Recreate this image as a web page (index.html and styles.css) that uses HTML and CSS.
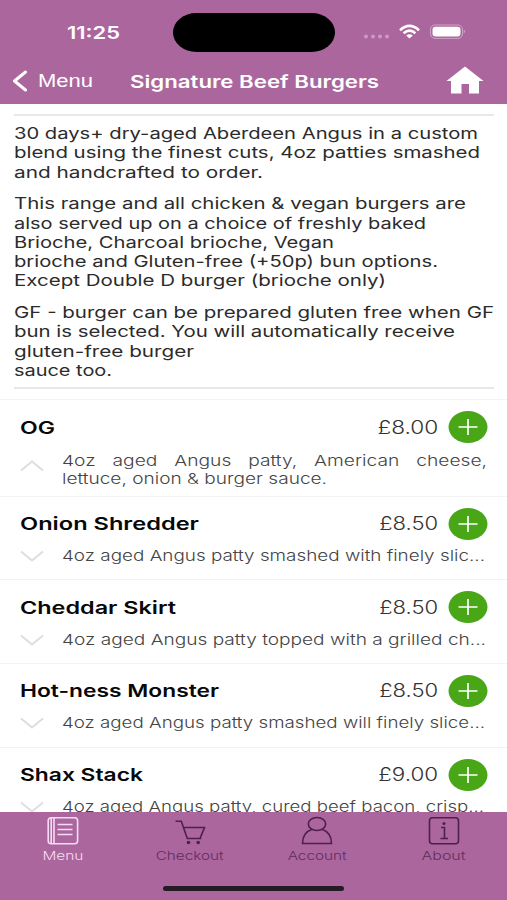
FILE: index.html
```
<!DOCTYPE html>
<html lang="en">
<head>
    <meta charset="UTF-8">
    <title>Signature Beef Burgers</title>
    <link rel="stylesheet" href="styles.css">
</head>
<body>
<div class="app">
    <header class="header">
        <div class="status">
            <span class="time"><span class="fit" data-w="53">11:25</span></span>
            <span class="island"></span>
            <svg class="status-icons" width="104" height="20" viewBox="0 0 104 20">
                <g fill="#fff" opacity=".35">
                    <circle cx="5" cy="14.5" r="2"/><circle cx="12" cy="14.5" r="2"/><circle cx="19" cy="14.5" r="2"/><circle cx="26" cy="14.5" r="2"/>
                </g>
                <g fill="none" stroke="#fff" stroke-width="2.6">
                    <path d="M39 8.2Q48.5-.3 58 8.2"/>
                    <path d="M42.6 11.3Q48.5 6 54.4 11.3"/>
                </g>
                <path d="M45.2 13.4Q48.5 11 51.8 13.4L48.5 16.4Z" fill="#fff"/>
                <rect x="69.5" y="3" width="32" height="13.4" rx="4.5" fill="none" stroke="#fff" opacity=".4"/>
                <rect x="71.5" y="4.8" width="28" height="9.8" rx="3" fill="#fff"/>
                <path d="M102.8 7.6q2 2 0 4z" fill="#fff" opacity=".5"/>
            </svg>
        </div>
        <div class="navbar">
            <svg class="back" width="16" height="22" viewBox="0 0 16 22"><path d="M13.5 2 2.5 11l11 9" fill="none" stroke="#fff" stroke-width="3" stroke-linecap="round" stroke-linejoin="round"/></svg>
            <span class="back-text"><span class="fit" data-w="55">Menu</span></span>
            <h1><span class="fit" data-w="249">Signature Beef Burgers</span></h1>
            <svg class="home" width="38" height="28" viewBox="0 0 38 28"><path d="M19 .5 37.5 15H33v12.5H23V18h-7.500v9.500H5V15H.5Z" fill="#fff"/></svg>
        </div>
    </header>

    <main class="content">
        <section class="intro">
            <p>
                <span class="fit" data-w="464">30 days+ dry-aged Aberdeen Angus in a custom</span>
                <span class="fit" data-w="466">blend using the finest cuts, 4oz patties smashed</span>
                <span class="fit" data-w="249">and handcrafted to order.</span>
            </p>
            <p>
                <span class="fit" data-w="452">This range and all chicken &amp; vegan burgers are</span>
                <span class="fit" data-w="412">also served up on a choice of freshly baked</span>
                <span class="fit" data-w="320">Brioche, Charcoal brioche, Vegan</span>
                <span class="fit" data-w="424">brioche and Gluten-free (+50p) bun options.</span>
                <span class="fit" data-w="372">Except Double D burger (brioche only)</span>
            </p>
            <p>
                <span class="fit" data-w="480">GF - burger can be prepared gluten free when GF</span>
                <span class="fit" data-w="441">bun is selected. You will automatically receive</span>
                <span class="fit" data-w="180">gluten-free burger</span>
                <span class="fit" data-w="98">sauce too.</span>
            </p>
        </section>

        <ul class="list">
            <li class="item open">
                <div class="row">
                    <h2><span class="fit" data-w="35">OG</span></h2>
                    <span class="price"><span class="fit" data-w="61">£8.00</span></span>
                    <svg class="add" width="40" height="34" viewBox="0 0 40 34"><ellipse cx="20" cy="17" rx="19.500" ry="16"/><path d="M10.500 17h19M20 9v16"/></svg>
                </div>
                <div class="row detail">
                    <svg class="arrow" width="24" height="12" viewBox="0 0 24 12"><path d="M1 10.500 12 1.500l11 9"/></svg>
                    <div class="desc">
                        <span class="fit justified" data-w="425">4oz aged Angus patty, American cheese,</span>
                        <span class="fit" data-w="265">lettuce, onion &amp; burger sauce.</span>
                    </div>
                </div>
            </li>
            <li class="item">
                <div class="row">
                    <h2><span class="fit" data-w="179">Onion Shredder</span></h2>
                    <span class="price"><span class="fit" data-w="59">£8.50</span></span>
                    <svg class="add" width="40" height="34" viewBox="0 0 40 34"><ellipse cx="20" cy="17" rx="19.500" ry="16"/><path d="M10.500 17h19M20 9v16"/></svg>
                </div>
                <div class="row detail">
                    <svg class="arrow" width="24" height="12" viewBox="0 0 24 12"><path d="M1 1.500l11 9 11-9"/></svg>
                    <div class="desc"><span class="fit" data-w="423">4oz aged Angus patty smashed with finely slic...</span></div>
                </div>
            </li>
            <li class="item">
                <div class="row">
                    <h2><span class="fit" data-w="156">Cheddar Skirt</span></h2>
                    <span class="price"><span class="fit" data-w="59">£8.50</span></span>
                    <svg class="add" width="40" height="34" viewBox="0 0 40 34"><ellipse cx="20" cy="17" rx="19.500" ry="16"/><path d="M10.500 17h19M20 9v16"/></svg>
                </div>
                <div class="row detail">
                    <svg class="arrow" width="24" height="12" viewBox="0 0 24 12"><path d="M1 1.500l11 9 11-9"/></svg>
                    <div class="desc"><span class="fit" data-w="424">4oz aged Angus patty topped with a grilled ch...</span></div>
                </div>
            </li>
            <li class="item">
                <div class="row">
                    <h2><span class="fit" data-w="199">Hot-ness Monster</span></h2>
                    <span class="price"><span class="fit" data-w="59">£8.50</span></span>
                    <svg class="add" width="40" height="34" viewBox="0 0 40 34"><ellipse cx="20" cy="17" rx="19.500" ry="16"/><path d="M10.500 17h19M20 9v16"/></svg>
                </div>
                <div class="row detail">
                    <svg class="arrow" width="24" height="12" viewBox="0 0 24 12"><path d="M1 1.500l11 9 11-9"/></svg>
                    <div class="desc"><span class="fit" data-w="423">4oz aged Angus patty smashed will finely slice...</span></div>
                </div>
            </li>
            <li class="item">
                <div class="row">
                    <h2><span class="fit" data-w="123">Shax Stack</span></h2>
                    <span class="price"><span class="fit" data-w="60">£9.00</span></span>
                    <svg class="add" width="40" height="34" viewBox="0 0 40 34"><ellipse cx="20" cy="17" rx="19.500" ry="16"/><path d="M10.500 17h19M20 9v16"/></svg>
                </div>
                <div class="row detail">
                    <svg class="arrow" width="24" height="12" viewBox="0 0 24 12"><path d="M1 1.500l11 9 11-9"/></svg>
                    <div class="desc"><span class="fit" data-w="422">4oz aged Angus patty, cured beef bacon, crisp...</span></div>
                </div>
            </li>
        </ul>
    </main>

    <footer class="footer">
        <nav class="tabs">
            <a class="tab active">
                <svg width="32" height="30" viewBox="0 0 32 30"><rect x="1.200" y="1.800" width="29.400" height="26" rx="3"/><path d="M4.200 2v26M7 2v26M10.500 8.500h15M10.500 13.500h15M10.500 18.500h15" /></svg>
                <span class="fit" data-w="41">Menu</span>
            </a>
            <a class="tab">
                <svg width="32" height="30" viewBox="0 0 32 30"><path d="M1.500 5.300h5.800l6 17.200h14M9.300 11.500h21.200L26 22.500"/><circle class="dot" cx="14.500" cy="26.500" r="1.800"/><circle class="dot" cx="24.200" cy="26.500" r="1.800"/></svg>
                <span class="fit" data-w="68">Checkout</span>
            </a>
            <a class="tab">
                <svg width="32" height="30" viewBox="0 0 32 30"><ellipse cx="16" cy="8" rx="8.700" ry="6.500"/><path d="M11 13.200C4.500 15.500 1.500 20 1.500 27.500h29c0-7.500-3-12-9.500-14.300"/></svg>
                <span class="fit" data-w="59">Account</span>
            </a>
            <a class="tab">
                <svg width="32" height="30" viewBox="0 0 32 30"><rect x="1.500" y="1.800" width="29" height="26" rx="3"/><path d="M13 11.500h3.500v11M12.500 22.500h7.500"/><circle class="dot" cx="16" cy="7.500" r="1.500"/></svg>
                <span class="fit" data-w="44">About</span>
            </a>
        </nav>
        <div class="home-bar"></div>
    </footer>
</div>

<script>
    // stretch each text line to its width
    var lines = document.querySelectorAll('.fit');
    for (var i = 0; i < lines.length; i++) {
        var w = lines[i].getBoundingClientRect().width;
        lines[i].style.transform = 'scaleX(' + lines[i].getAttribute('data-w') / w + ')';
    }
</script>
</body>
</html>
```
FILE: styles.css
```
* {
    box-sizing: border-box;
}
body {
    margin: 0;
    font-family: Inter, "Liberation Sans", sans-serif;
    background: #fff;
}
h1, h2, p, ul {
    margin: 0;
    padding: 0;
}
svg {
    display: block;
    flex: none;
}
.app {
    height: 900px;
    display: flex;
    flex-direction: column;
    overflow: hidden;
}
.fit {
    display: block;
    width: max-content;
    white-space: nowrap;
    transform-origin: 0 50%;
}

/* header */
.header {
    flex: none;
    height: 104px;
    background: #ab669e;
    color: #fff;
}
.status {
    height: 64px;
    display: flex;
    align-items: center;
    padding-left: 67px;
}
.time {
    width: 106px;
    font-size: 17.5px;
    font-weight: 600;
}
.island {
    width: 162px;
    height: 39px;
    border-radius: 24px / 20px;
    background: #000;
}
.status-icons {
    margin-left: 26px;
}
.navbar {
    height: 34px;
    display: flex;
    align-items: center;
    padding-left: 12px;
}
.back-text {
    width: 92px;
    margin-left: 10px;
    padding-top: 1px;
    font: 18px "Liberation Sans", sans-serif;
}
h1 {
    width: 316px;
    padding-top: 1px;
    font-size: 17px;
    font-weight: 600;
}
.home {
    margin-bottom: 2px;
}

/* intro */
.content {
    flex: 1;
    min-height: 0;
    overflow: hidden;
}
.intro {
    height: 275px;
    margin: 10px 13px 0 14px;
    padding-top: 8px;
    border-top: 2px solid #e8e8e8;
    border-bottom: 2px solid #e8e8e8;
    font-size: 16px;
    font-weight: 370;
    line-height: 19.3px;
    color: #2b2b2b;
}
.intro p {
    margin-bottom: 12.4px;
}

/* list */
.list {
    list-style: none;
    margin-top: 10px;
}
.item {
    height: 83.7px;
    border-top: 1px solid #f3f3f3;
    padding: 10px 19px 0 20px;
}
.item.open {
    height: 96.6px;
}
.row {
    display: flex;
    align-items: center;
}
h2 {
    flex: 1;
    font-size: 17.5px;
    font-weight: 600;
    color: #080808;
}
.price {
    font-size: 18px;
    font-weight: 300;
    color: #333;
}
.price .fit {
    transform-origin: 100% 50%;
}
.add {
    margin-left: 10px;
    fill: #48a617;
    stroke: none;
}
.add path {
    stroke: #fff;
    stroke-width: 1.700;
}
.detail {
    margin-top: 6.5px;
}
.open .detail {
    margin-top: 8px;
}
.arrow {
    fill: none;
    stroke: #ddd;
    stroke-width: 1.800;
}
.open .arrow {
    margin-bottom: 8px;
}
.desc {
    margin-left: 18px;
    font-size: 15px;
    font-weight: 300;
    line-height: 18px;
    color: #444;
}
.justified {
    word-spacing: 9px;
}

/* tab bar */
.footer {
    flex: none;
    height: 88px;
    background: #ab669e;
}
.tabs {
    display: flex;
    height: 74px;
    padding-top: 4px;
}
.tab {
    flex: 1;
    display: flex;
    flex-direction: column;
    align-items: center;
    font-size: 12px;
    line-height: 15px;
    font-weight: 300;
    color: #612d5d;
}
.tab .fit {
    margin-top: 2px;
    transform-origin: 50% 50%;
}
.tab svg {
    fill: none;
    stroke: #4e204b;
    stroke-width: 1.600;
}
.tab .dot {
    fill: #4e204b;
    stroke: none;
}
.tab.active {
    color: #f6dcf3;
}
.tab.active svg {
    stroke: #f6dcf3;
}
.home-bar {
    width: 181px;
    height: 5px;
    margin: 0 auto;
    border-radius: 3px;
    background: #241b24;
}
```
